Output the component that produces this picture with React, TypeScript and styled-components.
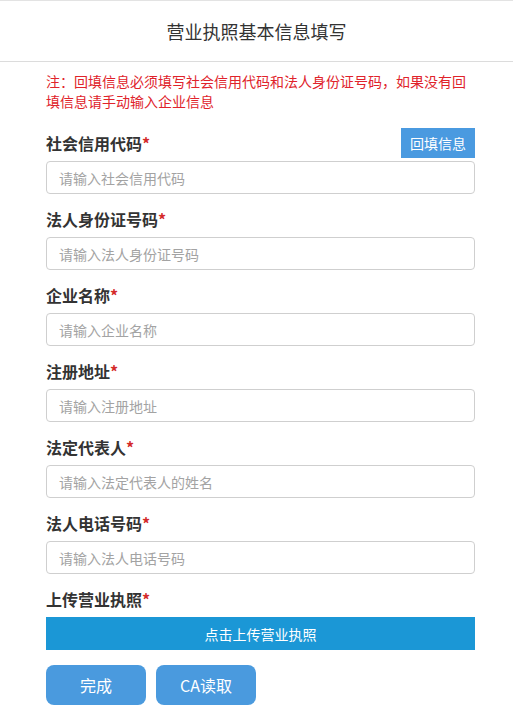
import React from 'react'
import styled, { createGlobalStyle } from 'styled-components'

const fields: Array<Field> = [
  { label: '社会信用代码', placeholder: '请输入社会信用代码', backfill: true },
  { label: '法人身份证号码', placeholder: '请输入法人身份证号码' },
  { label: '企业名称', placeholder: '请输入企业名称' },
  { label: '注册地址', placeholder: '请输入注册地址' },
  { label: '法定代表人', placeholder: '请输入法定代表人的姓名' },
  { label: '法人电话号码', placeholder: '请输入法人电话号码' },
]

interface Field {
  label: string
  placeholder: string
  backfill?: boolean
}

function App() {
  return (
    <>
      <GlobalStyle />
      <Page>
        <Header>营业执照基本信息填写</Header>
        <Body>
          <Note>
            注：回填信息必须填写社会信用代码和法人身份证号码，如果没有回填信息请手动输入企业信息
          </Note>

          {fields.map(field => (
            <FieldGroup key={field.label}>
              <LabelRow>
                <Label>
                  {field.label}
                  <Star>*</Star>
                </Label>
                {field.backfill && <BackfillButton>回填信息</BackfillButton>}
              </LabelRow>
              <Input placeholder={field.placeholder} />
            </FieldGroup>
          ))}

          <FieldGroup>
            <LabelRow>
              <Label>
                上传营业执照
                <Star>*</Star>
              </Label>
            </LabelRow>
            <UploadBar>点击上传营业执照</UploadBar>
          </FieldGroup>

          <Actions>
            <ActionButton>完成</ActionButton>
            <ActionButton>CA读取</ActionButton>
          </Actions>
        </Body>
      </Page>
    </>
  )
}

///////////////////////////////////////////////////////////////////////////////////

const GlobalStyle = createGlobalStyle`
  html, body {
    margin: 0;
    padding: 0;
    background: #fff;
  }
  body {
    font-family: "Noto Sans CJK SC", "Noto Sans", sans-serif;
    color: #333;
  }
`

const Page = styled.div`
  width: 513px;
  min-height: 725px;
  border-top: 1px solid #e3e3e3;
  box-sizing: border-box;
`

const Header = styled.div`
  height: 60px;
  display: flex;
  align-items: center;
  justify-content: center;
  font-size: 18px;
  color: #333;
  border-bottom: 1px solid #dcdcdc;
`

const Body = styled.div`
  padding: 9px 38px 0 46px;
`

const Note = styled.p`
  margin: 0 0 17px;
  font-size: 14px;
  line-height: 20px;
  color: #e0232b;
`

const FieldGroup = styled.div`
  margin-bottom: 10px;
`

const LabelRow = styled.div`
  height: 30px;
  display: flex;
  align-items: center;
  justify-content: space-between;
  margin-bottom: 3px;
`

const Label = styled.span`
  font-size: 16px;
  font-weight: bold;
  color: #333;
`

const Star = styled.span`
  color: #d42a2a;
`

const BackfillButton = styled.button`
  height: 30px;
  padding: 0 9px;
  border: none;
  background: #4a9ae0;
  color: #fff;
  font-family: inherit;
  font-size: 14px;
`

const Input = styled.input`
  display: block;
  width: 100%;
  height: 33px;
  box-sizing: border-box;
  padding: 0 12px;
  border: 1px solid #cfcfcf;
  border-radius: 4px;
  font-family: inherit;
  font-size: 14px;
  color: #333;
  outline: none;
  &::placeholder {
    color: #a3a3a3;
  }
`

const UploadBar = styled.div`
  height: 33px;
  display: flex;
  align-items: center;
  justify-content: center;
  background: #1b97d6;
  color: #fff;
  font-size: 14px;
`

const Actions = styled.div`
  display: flex;
  gap: 10px;
  margin-top: 15px;
`

const ActionButton = styled.button`
  width: 100px;
  height: 40px;
  border: none;
  border-radius: 8px;
  background: #4a9ade;
  color: #fff;
  font-family: inherit;
  font-size: 16px;
`

export default App
